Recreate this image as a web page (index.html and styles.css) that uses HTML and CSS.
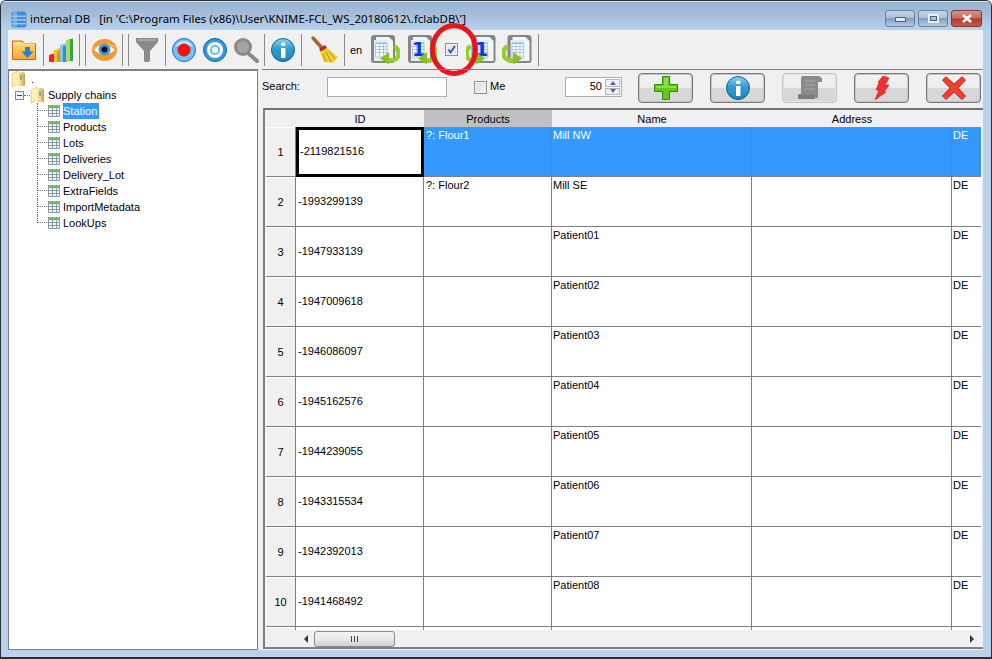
FILE: index.html
```html
<!DOCTYPE html>
<html lang="en">
<head>
<meta charset="utf-8">
<title>internal DB</title>
<link rel="stylesheet" href="styles.css">
</head>
<body>
<svg class="defs" width="0" height="0">
  <defs>
    <linearGradient id="infoG" x1="0" y1="0" x2="0" y2="1"><stop offset="0" stop-color="#8fd0ee"/><stop offset=".45" stop-color="#2f9dd0"/><stop offset="1" stop-color="#1f86b8"/></linearGradient>
    <linearGradient id="foldG" x1="0" y1="0" x2="0" y2="1"><stop offset="0" stop-color="#ffe070"/><stop offset="1" stop-color="#f6a52a"/></linearGradient>
    <linearGradient id="treeF" x1="0" y1="0" x2="1" y2="0"><stop offset="0" stop-color="#fff3b8"/><stop offset=".6" stop-color="#e9cf7c"/><stop offset="1" stop-color="#b99c4c"/></linearGradient>
    <symbol id="info" viewBox="0 0 24 24">
      <circle cx="12" cy="12" r="11.5" fill="url(#infoG)" stroke="#14608f"/>
      <rect x="10" y="10" width="4.5" height="10" fill="#fff"/>
      <rect x="10" y="4.5" width="4.5" height="3.6" rx="1.5" fill="#fff"/>
    </symbol>
    <symbol id="page" viewBox="0 0 24 28">
      <rect x="0" y="0" width="24" height="28" rx="3" fill="#858585"/>
      <path d="M5 2H18L22 6V26H5Z" fill="#f3f6f8"/>
      <path d="M3 5H17V26H3Z" fill="#e6ecf0"/>
      <path d="M4.500 8.500H16V22H4.500ZM4.500 11.500H16M4.500 14.500H16M4.500 17.500H16M8.500 8.500V22M12.500 8.500V22" fill="#f2f7fb" stroke="#a3c0d2" stroke-width=".8"/>
      <rect x="5" y="7.500" width="11" height="1.400" fill="#7cc2e6"/>
    </symbol>
    <symbol id="arrow" viewBox="0 0 20 20">
      <path d="M14.500 1C20 5 20 13 14 15L8 15.500" fill="none" stroke="#93cf26" stroke-width="4.400"/>
      <path d="M9 7L0 13.500L9 19.500Z" fill="#86c41c"/>
    </symbol>
    <symbol id="grid" viewBox="0 0 12 12">
      <rect width="12" height="12" fill="#eef3f7"/>
      <rect width="12" height="2" fill="#76c442"/>
      <path d="M0 2.500H12M0 5.500H12M0 8.500H12M0 11.500H12M.5 2V12M4.500 2V12M8.500 2V12M11.500 2V12" stroke="#8b9aa6" stroke-width="1"/>
    </symbol>
    <symbol id="tfolder" viewBox="0 0 14 16">
      <path d="M1 3L7 0V13L1 16Z" fill="#fff0b0" stroke="#cdb469" stroke-width=".6"/>
      <path d="M6 1H12L14 3V15H6Z" fill="url(#treeF)"/>
      <path d="M9 4H11V9H9Z" fill="#8aa0b8"/>
    </symbol>
  </defs>
</svg>
<div class="window">
  <header class="titlebar">
    <svg class="appicon" width="16" height="17" viewBox="0 0 16 18" preserveAspectRatio="none"><rect x="0.500" y="0.500" width="15" height="17" rx="3" fill="#3f8fd6"/><path d="M1 5.500H15M1 9.500H15M1 13.500H15" stroke="#cfe6f8" stroke-width="1"/><rect x="2" y="1" width="4" height="16" fill="#8cc6f0" opacity=".6"/></svg>
    <span class="title">internal DB   [in 'C:\Program Files (x86)\User\KNIME-FCL_WS_20180612\.fclabDB\']</span>
    <div class="winbtns">
      <span class="wbtn"><i class="gl-min"></i></span>
      <span class="wbtn"><i class="gl-max"></i></span>
      <span class="wbtn close"><svg width="12" height="9" viewBox="0 0 12 9"><path d="M2 1L10 8M10 1L2 8" stroke="#fff" stroke-width="2.600"/></svg></span>
    </div>
  </header>
  <main class="client">
    <nav class="toolbar">
      <svg class="t27" height="32" viewBox="12 33 27 32"><path d="M12.500 40V58.500H35.500V42.500H24L22 40Z" fill="url(#foldG)" stroke="#c56a26"/><path d="M13 43H35" stroke="#fff3b0"/><path d="M25 46H30V50.500H33.500L27.500 57L21.500 50.500H25Z" fill="#2a7fd2"/></svg>
      <span class="sep"></span>
      <svg class="t27" height="32" viewBox="48 33 27 32"><path d="M49 54L55 52V61H49Z" fill="#e5262a"/><path d="M54 49L60 47V61H54Z" fill="#f4c428"/><path d="M57 50H60V61H57Z" fill="#f08a1c"/><path d="M60 44L66 42V61H60Z" fill="#7fc5ee"/><path d="M63 45H66V61H63Z" fill="#2f8fd8"/><path d="M66 39L73 37V60L66 61Z" fill="#a8d67c"/><path d="M70 38H73V60H70Z" fill="#3da53a"/></svg>
      <span class="sep"></span><span class="sep"></span>
      <svg class="t28" height="32" viewBox="90 33 28 32"><ellipse cx="104.500" cy="49" rx="12.500" ry="11" fill="#f09a34"/><path d="M92 49Q104 37 117 47Q106 41 92 49Z" fill="#ffce7c"/><path d="M94 49Q104 39 115 49Q104 58 94 49Z" fill="#fff"/><circle cx="104.500" cy="48.500" r="6" fill="#3f98d8"/><circle cx="104.500" cy="48.500" r="3" fill="#111"/></svg>
      <span class="sep"></span><span class="sep"></span>
      <svg class="t28" height="32" viewBox="133 33 28 32"><path d="M136 37H158V41L150 50V60L148 61H145L144 60V50L136 41Z" fill="#8a8a8a"/><path d="M138 38H156V40H138Z" fill="#a6a6a6"/></svg>
      <span class="sep"></span>
      <svg class="t28" height="32" viewBox="170 33 28 32"><circle cx="184" cy="49" r="11.500" fill="#78c0f0" stroke="#1f6fb8"/><path d="M175 46A10 10 0 0 1 193 46A14 10 0 0 0 175 46Z" fill="#c8e8fb"/><circle cx="184" cy="49" r="6.500" fill="#f01414"/></svg>
      <svg class="t26" height="32" viewBox="202 33 26 32"><circle cx="215" cy="49" r="11.500" fill="#2f9ae8" stroke="#11609f"/><circle cx="215" cy="49" r="8" fill="#fff"/><circle cx="215" cy="49" r="5" fill="#5fb4ee"/><circle cx="215" cy="49" r="3.200" fill="#eef7fd"/></svg>
      <svg class="t28" height="32" viewBox="232 33 28 32"><path d="M248 52L257 60" stroke="#8a8a8a" stroke-width="4" stroke-linecap="round"/><circle cx="243" cy="46" r="7.500" fill="#a4a4a4" stroke="#8a8a8a" stroke-width="3"/></svg>
      <span class="sep"></span>
      <svg class="t28" height="32" viewBox="269 33 28 32"><use href="#info" x="271" y="37" width="24" height="24"/></svg>
      <span class="sep"></span>
      <svg class="t34" height="32" viewBox="306 33 34 32"><path d="M313 37L322 47" stroke="#a8652a" stroke-width="3.400" stroke-linecap="round"/><path d="M319 48L325 44L327 47L321 51Z" fill="#c0202a"/><path d="M320 51L327 47L338 56L333 62L324 61Z" fill="#f0d030"/><path d="M323 53L326 61M326 51L331 61M329 50L335 58" stroke="#b8901a" stroke-width="1"/></svg>
      <span class="sep"></span>
      <span class="en">en</span>
      <svg class="t36" height="32" viewBox="367 33 36 32"><use href="#page" x="370" y="34" width="26" height="28"/><use href="#arrow" x="380" y="44" width="20" height="20"/></svg>
      <svg class="t30" height="32" viewBox="407 33 30 32"><use href="#page" x="407" y="34" width="26" height="28"/><text x="412" y="55" class="one">1</text><use href="#arrow" x="418" y="44" width="20" height="20"/></svg>
      <span class="t21"><span class="chk on"><svg width="11" height="11" viewBox="0 0 11 11"><path d="M2.500 5.500L4.500 8.500L9 2" fill="none" stroke="#3a55a0" stroke-width="1.800"/></svg></span></span>
      <svg class="t30" height="32" viewBox="466 33 30 32"><use href="#page" x="471" y="34" width="25" height="28"/><text x="475" y="55" class="one">1</text><g transform="translate(485 44) scale(-1 1)"><use href="#arrow" width="20" height="20"/></g></svg>
      <svg class="t34" height="32" viewBox="500 33 34 32"><use href="#page" x="507" y="34" width="25" height="28"/><g transform="translate(522 44) scale(-1 1)"><use href="#arrow" width="20" height="20"/></g></svg>
      <span class="sep"></span>
      <span class="redcircle"></span>
    </nav>
    <div class="panes">
      <aside class="tree">
        <div class="troot"><svg width="14" height="16"><use href="#tfolder"/></svg><span class="dot">.</span></div>
        <div class="tnode"><span class="exp"></span><span class="dash"></span><svg width="14" height="16"><use href="#tfolder"/></svg><span class="nlabel">Supply chains</span></div>
        <ul class="tlist">
          <li><span class="conn"></span><svg width="12" height="12"><use href="#grid"/></svg><span class="lbl sel">Station</span></li>
          <li><span class="conn"></span><svg width="12" height="12"><use href="#grid"/></svg><span class="lbl">Products</span></li>
          <li><span class="conn"></span><svg width="12" height="12"><use href="#grid"/></svg><span class="lbl">Lots</span></li>
          <li><span class="conn"></span><svg width="12" height="12"><use href="#grid"/></svg><span class="lbl">Deliveries</span></li>
          <li><span class="conn"></span><svg width="12" height="12"><use href="#grid"/></svg><span class="lbl">Delivery_Lot</span></li>
          <li><span class="conn"></span><svg width="12" height="12"><use href="#grid"/></svg><span class="lbl">ExtraFields</span></li>
          <li><span class="conn"></span><svg width="12" height="12"><use href="#grid"/></svg><span class="lbl">ImportMetadata</span></li>
          <li><span class="conn last"></span><svg width="12" height="12"><use href="#grid"/></svg><span class="lbl">LookUps</span></li>
        </ul>
      </aside>
      <section class="right">
        <div class="searchbar">
          <label class="slabel">Search:</label>
          <span class="sinput"></span>
          <span class="chk me"></span><span class="melabel">Me</span>
          <span class="spin"><span class="spinv">50</span><span class="spinbtns"><i class="up"></i><i class="down"></i></span></span>
          <button class="btn plus"><svg width="24" height="24" viewBox="0 0 24 24"><path d="M8.500 .5H15.500V8.500H23.500V15.500H15.500V23.500H8.500V15.500H.5V8.500H8.500Z" fill="#63c918" stroke="#2c8a12"/><path d="M10 2H14V10H22V12H2V10H10Z" fill="#8fe040"/></svg></button>
          <button class="btn"><svg width="24" height="24"><use href="#info"/></svg></button>
          <button class="btn dis"><svg width="24" height="24" viewBox="0 0 24 24"><path d="M4 0H21L24 2V6H20V22H0V18H3V2Z" fill="#8b8b8b"/><path d="M7 5H17M7 9H17M7 13H17" stroke="#a8a8a8"/><path d="M0 19H17V23H0Z" fill="#7c7c7c"/></svg></button>
          <button class="btn"><svg width="16" height="24" viewBox="0 0 16 24"><path d="M9 0L15 2L11 9L15 9L10 16L12 16L1 24L5 14L2 14L5 7L4 6Z" fill="#f23030" stroke="#c01010" stroke-width=".6"/></svg></button>
          <button class="btn"><svg width="24" height="24" viewBox="0 0 24 24"><path d="M4 0.800L12 8L20 .8L23.500 4L16 12L23.500 20L20 23.500L12 16L4 23.500L.5 20L8 12L.5 4Z" fill="#f04030" stroke="#c82020" stroke-linejoin="round"/></svg></button>
        </div>
        <div class="tablewrap">
          <div class="port">
            <div class="table">
              <div class="corner"></div><div class="hd">ID</div><div class="hd hdsel">Products</div><div class="hd">Name</div><div class="hd">Address</div><div class="hd hdnone"></div>
              <div class="rh">1</div><div class="c id focus">-2119821516</div><div class="c s">?: Flour1</div><div class="c s">Mill NW</div><div class="c s"></div><div class="c s">DE</div>
              <div class="rh">2</div><div class="c id">-1993299139</div><div class="c">?: Flour2</div><div class="c">Mill SE</div><div class="c"></div><div class="c">DE</div>
              <div class="rh">3</div><div class="c id">-1947933139</div><div class="c"></div><div class="c">Patient01</div><div class="c"></div><div class="c">DE</div>
              <div class="rh">4</div><div class="c id">-1947009618</div><div class="c"></div><div class="c">Patient02</div><div class="c"></div><div class="c">DE</div>
              <div class="rh">5</div><div class="c id">-1946086097</div><div class="c"></div><div class="c">Patient03</div><div class="c"></div><div class="c">DE</div>
              <div class="rh">6</div><div class="c id">-1945162576</div><div class="c"></div><div class="c">Patient04</div><div class="c"></div><div class="c">DE</div>
              <div class="rh">7</div><div class="c id">-1944239055</div><div class="c"></div><div class="c">Patient05</div><div class="c"></div><div class="c">DE</div>
              <div class="rh">8</div><div class="c id">-1943315534</div><div class="c"></div><div class="c">Patient06</div><div class="c"></div><div class="c">DE</div>
              <div class="rh">9</div><div class="c id">-1942392013</div><div class="c"></div><div class="c">Patient07</div><div class="c"></div><div class="c">DE</div>
              <div class="rh">10</div><div class="c id">-1941468492</div><div class="c"></div><div class="c">Patient08</div><div class="c"></div><div class="c">DE</div>
              <div class="rh"></div><div class="c id"></div><div class="c"></div><div class="c"></div><div class="c"></div><div class="c"></div>
            </div>
          </div>
          <div class="hscroll">
            <span class="arrow-l"></span>
            <span class="thumb"><i></i><i></i><i></i></span>
            <span class="arrow-r"></span>
          </div>
        </div>
      </section>
    </div>
  </main>
</div>
</body>
</html>
```

FILE: styles.css
```css
* { box-sizing: border-box; }
html, body { margin: 0; padding: 0; background: #fff; }
body { width: 992px; height: 659px; overflow: hidden; font: 11px/16px "Liberation Sans", Tahoma, sans-serif; color: #000; }
.defs { display: block; height: 0; }
.window {
  width: 992px; height: 659px; display: flex; flex-direction: column;
  background: #b9d1ea; border: 1px solid #24303c; border-bottom-width: 2px; border-radius: 6px 6px 0 0;
  overflow: hidden;
}
.titlebar {
  flex: 0 0 29px; display: flex; align-items: center; padding: 6px 9px 0 10px;
  background: linear-gradient(180deg, #98b3d0 0%, #a6c0dc 50%, #b9d2ec 100%);
  border-top: 1px solid #d5e2ef;
}
.appicon { flex: none; }
.title { margin-left: 3px; font: 11.4px/16px "Noto Sans", sans-serif; white-space: pre; }
.winbtns { margin-left: auto; display: flex; gap: 3px; margin-top: -2px; }
.wbtn {
  width: 30px; height: 17px; border: 1px solid #6c8099; border-radius: 3px;
  display: flex; align-items: center; justify-content: center;
  background: linear-gradient(180deg, #c2d6ea 0%, #a8c1dc 48%, #7f9dbe 50%, #b5cde6 100%);
}
.wbtn.close { border-color: #7a3b38; width: 31px; background: linear-gradient(180deg, #d9938a 0%, #c96a5e 48%, #ad3b2e 52%, #c65a4c 100%); }
.gl-min { display: block; width: 11px; height: 5px; background: #e8eef5; border: 1px solid #4c5f78; margin-top: 3px; }
.gl-max { display: block; width: 11px; height: 9px; border: 2px solid #e8eef5; outline: 1px solid #4c5f78; outline-offset: -3px; background: #a8c1dc; }

.client { flex: 0 0 620px; margin: 0 7px; width: 975px; background: #f0f0f0; display: flex; flex-direction: column; }
.toolbar { position: relative; flex: 0 0 39px; display: flex; align-items: center; gap: 4px; padding-left: 4px; }
.toolbar svg { display: block; flex: none; }
.t26 { width: 26px; } .t27 { width: 27px; } .t28 { width: 28px; } .t30 { width: 30px; } .t34 { width: 34px; } .t36 { width: 36px; }
.t21 { flex: none; width: 21px; display: flex; justify-content: center; }
.sep { flex: none; width: 1px; height: 32px; background: #8a8a8a; }
.sep + .sep { margin-left: 1px; }
.en { flex: none; width: 14px; font-size: 11px; text-align: center; }
.one { font: bold 19px "DejaVu Sans", sans-serif; fill: #0a37ee; }
.chk { display: flex; flex: none; width: 13px; height: 13px; border: 1px solid #8e8f8f; background: linear-gradient(135deg, #dcdcdc, #f6f6f6); box-shadow: inset 0 0 0 1px #f4f4f4; align-items: center; justify-content: center; }
.chk.on { background: #e0e4ee; }
.redcircle { position: absolute; left: 422px; top: -7px; width: 48px; height: 53px; border: 5px solid #e8141e; border-radius: 50%; }

.panes { flex: 1; display: flex; gap: 4px; min-height: 0; }
.tree { width: 250px; background: #fff; border: 1px solid #808080; border-width: 2px 1px 1px 1px; }
.troot { display: flex; height: 16px; padding-left: 2px; }
.dot { margin-left: 6px; }
.tnode { display: flex; align-items: center; height: 16px; padding-left: 6px; }
.exp { flex: none; width: 9px; height: 9px; border: 1px solid #7c8a99; background: linear-gradient(90deg, transparent 1px, #2c4a78 1px, #2c4a78 6px, transparent 6px) center / 100% 1px no-repeat, #f5f5f5; }
.dash { flex: none; width: 6px; height: 1px; border-top: 1px dotted #777; }
.nlabel { margin-left: 4px; }
.tlist { list-style: none; margin: 0; padding: 0 0 0 28px; }
.tlist li { display: flex; align-items: center; height: 16px; }
.tlist svg { flex: none; display: block; }
.conn { flex: none; align-self: stretch; width: 11px; border-left: 1px dotted #777;
  background: repeating-linear-gradient(90deg, #777 0 1px, transparent 1px 2px) 0 7px / 100% 1px no-repeat; }
.conn.last { align-self: flex-start; height: 8px; background-position: 0 7px; }
.lbl { margin-left: 3px; padding: 0 2px 0 0; line-height: 16px; white-space: nowrap; }
.lbl.sel { background: #3399ff; color: #fff; }

.right { flex: 1; min-width: 0; display: flex; flex-direction: column; }
.searchbar { flex: 0 0 39px; display: flex; align-items: center; border-top: 1px solid #808080; position: relative; }
.slabel { width: 65px; flex: none; margin-top: -7px; }
.sinput { flex: none; width: 120px; height: 20px; margin-top: -4px; background: #fff; border: 1px solid #abadb3; }
.me { margin-left: 27px; margin-top: -4px; }
.melabel { flex: none; width: 78px; padding-left: 3px; margin-top: -6px; }
.spin { flex: none; display: flex; width: 57px; height: 20px; margin-top: -4px; background: #fff; border: 1px solid #abadb3; }
.spinv { flex: 1; text-align: right; padding-right: 3px; line-height: 16px; }
.spinbtns { flex: none; width: 15px; display: flex; flex-direction: column; gap: 1px; margin: 1px 1px 1px 0; }
.spinbtns i { flex: 1; border: 1px solid #b5b5b5; background: #eef1f6; position: relative; display: flex; align-items: center; justify-content: center; }
.spinbtns i::after { content: ""; border-left: 3px solid transparent; border-right: 3px solid transparent; }
.up::after { border-bottom: 4px solid #5566aa; }
.down::after { border-top: 4px solid #5566aa; }
.btn {
  flex: none; width: 55px; height: 30px; margin: -3px 0 0 17px; padding: 0; border: 1px solid #777; border-radius: 4px;
  box-shadow: inset 0 0 0 1px #c4c4c4;
  background: linear-gradient(180deg, #f2f2f2 0%, #ececec 50%, #d8d8d8 50%, #d6d6d6 100%);
  display: flex; align-items: center; justify-content: center;
}
.btn.plus { margin-left: 16px; }
.btn.dis { border-color: #c4c4c4; box-shadow: inset 0 0 0 1px #e4e4e4; }

.tablewrap { flex: 1; min-height: 0; display: flex; flex-direction: column; border-top: 2px solid #707070; border-left: 2px solid #808080; border-bottom: 2px solid #808080; margin: 0 0 1px 1px; }
.port { flex: 0 0 520px; overflow: hidden; background: #fff; margin-left: 1px; border-right: 2px solid #f0f0f0; }
.table { display: grid; grid-template-columns: 30px 128px 128px 200px 200px 30px; grid-template-rows: 17px repeat(11, 50px); width: 716px; }
.corner, .hd { background: #f0f0f0; text-align: center; line-height: 19px; }
.hdsel { background: #c0c0c0; }
.rh { background: #f0f0f0; border-right: 1px solid #808080; border-bottom: 1px solid #808080; box-shadow: inset 1px 1px 0 #fff; display: flex; align-items: center; justify-content: center; }
.c { border-right: 1px solid #808080; border-bottom: 1px solid #808080; padding: 0 2px; background: #fff; line-height: 16px; white-space: nowrap; overflow: hidden; }
.c:nth-child(6n) { border-right: 0; padding-left: 1px; }
.c:nth-child(6n+4) { padding-left: 1px; }
.c.s { background: #3399ff; color: #fff; }
.id { display: flex; align-items: center; padding-bottom: 2px; }
.focus { border: 3px solid #000; padding-left: 1px; padding-bottom: 2px; }
.hscroll { flex: 1; display: flex; align-items: center; background: #f0f0f0; position: relative; }
.arrow-l { margin-left: 39px; width: 0; height: 0; border: 4px solid transparent; border-left: 0; border-right: 4px solid #333; }
.thumb { margin-left: 6px; width: 81px; height: 16px; border: 1px solid #8c8c8c; border-radius: 3px; background: linear-gradient(180deg, #f4f4f4, #e8e8e8 50%, #cfcfcf 100%); display: flex; align-items: center; justify-content: center; gap: 1px; }
.thumb i { display: block; width: 1px; height: 6px; background: #444; margin: 0 1px 0 0; }
.arrow-r { margin-left: 575px; width: 0; height: 0; border: 4px solid transparent; border-right: 0; border-left: 4px solid #333; }
```
